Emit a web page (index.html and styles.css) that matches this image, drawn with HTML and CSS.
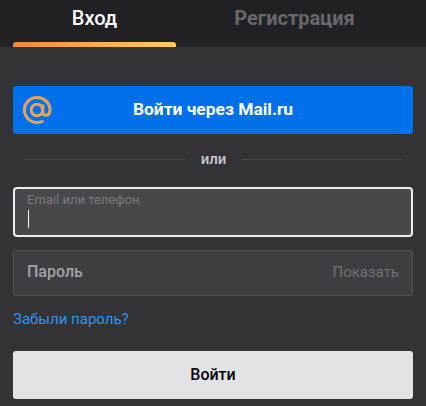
FILE: index.html
```html
<!DOCTYPE html>
<html lang="ru">
<head>
  <meta charset="UTF-8" />
  <title>Вход</title>
  <link rel="stylesheet" href="styles.css">
</head>
<body>
  <div class="tabs">
    <div class="tab active">Вход</div>
    <div class="tab">Регистрация</div>
  </div>

  <div class="content">
    <button class="mail-btn">
      <svg class="mail-icon" viewBox="0 0 32 32" width="30" height="30" fill="none" stroke="#e5a35c" stroke-width="3.3">
        <circle cx="16" cy="16" r="6.2" />
        <path d="M22.2 10v8.5c0 4.4 6.8 4.4 7.6-1.5.2-1 .2-1.8 0-2.8C28.8 7.6 23 2.6 16 2.6 8.6 2.6 2.6 8.6 2.6 16S8.6 29.4 16 29.4c2.8 0 5-.7 7-2" />
      </svg>
      Войти через Mail.ru
    </button>

    <div class="divider"><span>или</span></div>

    <div class="field focused">
      <div class="field-label">Email или телефон</div>
      <div class="caret"></div>
    </div>

    <div class="field password">
      <span class="password-label">Пароль</span>
      <span class="show">Показать</span>
    </div>

    <a class="forgot" href="#">Забыли пароль?</a>

    <button class="submit">Войти</button>
  </div>
</body>
</html>
```

FILE: styles.css
```css
body {
  margin: 0;
  height: 406px;
  overflow: hidden;
  background: #333236;
  font-family: Roboto, sans-serif;
  display: flex;
  flex-direction: column;
}
.tabs {
  display: flex;
  height: 47px;
  padding: 0 13px;
  background: #212024;
}
.tab {
  width: 163px;
  text-align: center;
  padding-top: 6px;
  font-size: 20px;
  line-height: 24px;
  font-weight: 700;
  color: #68676b;
}
.tab + .tab {
  margin-left: 37px;
}
.tab.active {
  color: #fff;
  position: relative;
  font-weight: 500;
}
.tab.active::after {
  content: "";
  position: absolute;
  left: 0;
  right: 0;
  bottom: 0;
  height: 5px;
  border-radius: 3px 3px 0 0;
  background: linear-gradient(90deg, #ee8b3c, #f6d163);
}
.content {
  flex: 1;
  display: flex;
  flex-direction: column;
  padding: 39px 13px 0;
}
.mail-btn {
  position: relative;
  height: 48px;
  padding: 0 0 2px;
  border: none;
  border-radius: 3px;
  background: #0070ea;
  color: #fff;
  font-family: inherit;
  font-size: 17.4px;
  font-weight: 700;
}
.mail-icon {
  position: absolute;
  left: 9px;
  top: 9px;
}
.divider {
  display: flex;
  align-items: center;
  gap: 16px;
  margin: 15px 10px 0 11px;
  height: 20px;
  font-size: 15px;
  font-weight: 500;
  color: #c9c8cc;
}
.divider::before,
.divider::after {
  content: "";
  flex: 1;
  height: 1px;
  background: #4a494d;
}
.field {
  box-sizing: border-box;
  height: 46px;
  border: 1px solid #545357;
  border-radius: 3px;
  background: #3e3d41;
}
.field.focused {
  margin-top: 18px;
  height: 50px;
  border: 2px solid #eeeef0;
  border-radius: 4px;
  background: #48474b;
  padding: 3px 12px;
}
.field-label {
  font-size: 13px;
  line-height: 15px;
  color: #79787c;
}
.caret {
  width: 1px;
  height: 18px;
  margin: 3px 0 0 1px;
  background: #fff;
}
.field.password {
  margin-top: 13px;
  display: flex;
  align-items: center;
  justify-content: space-between;
  padding: 0 13px 3px;
}
.password-label {
  font-size: 16px;
  font-weight: 500;
  color: #a3a2a6;
}
.show {
  font-size: 15px;
  color: #727175;
}
.forgot {
  margin-top: 14px;
  font-size: 15px;
  line-height: 18px;
  color: #2f96ee;
  text-decoration: none;
}
.submit {
  margin-top: 23px;
  height: 48px;
  padding: 0 0 2px;
  border: none;
  border-radius: 3px;
  background: #e3e3e7;
  color: #000;
  font-family: inherit;
  font-size: 16px;
  font-weight: 500;
}
```
